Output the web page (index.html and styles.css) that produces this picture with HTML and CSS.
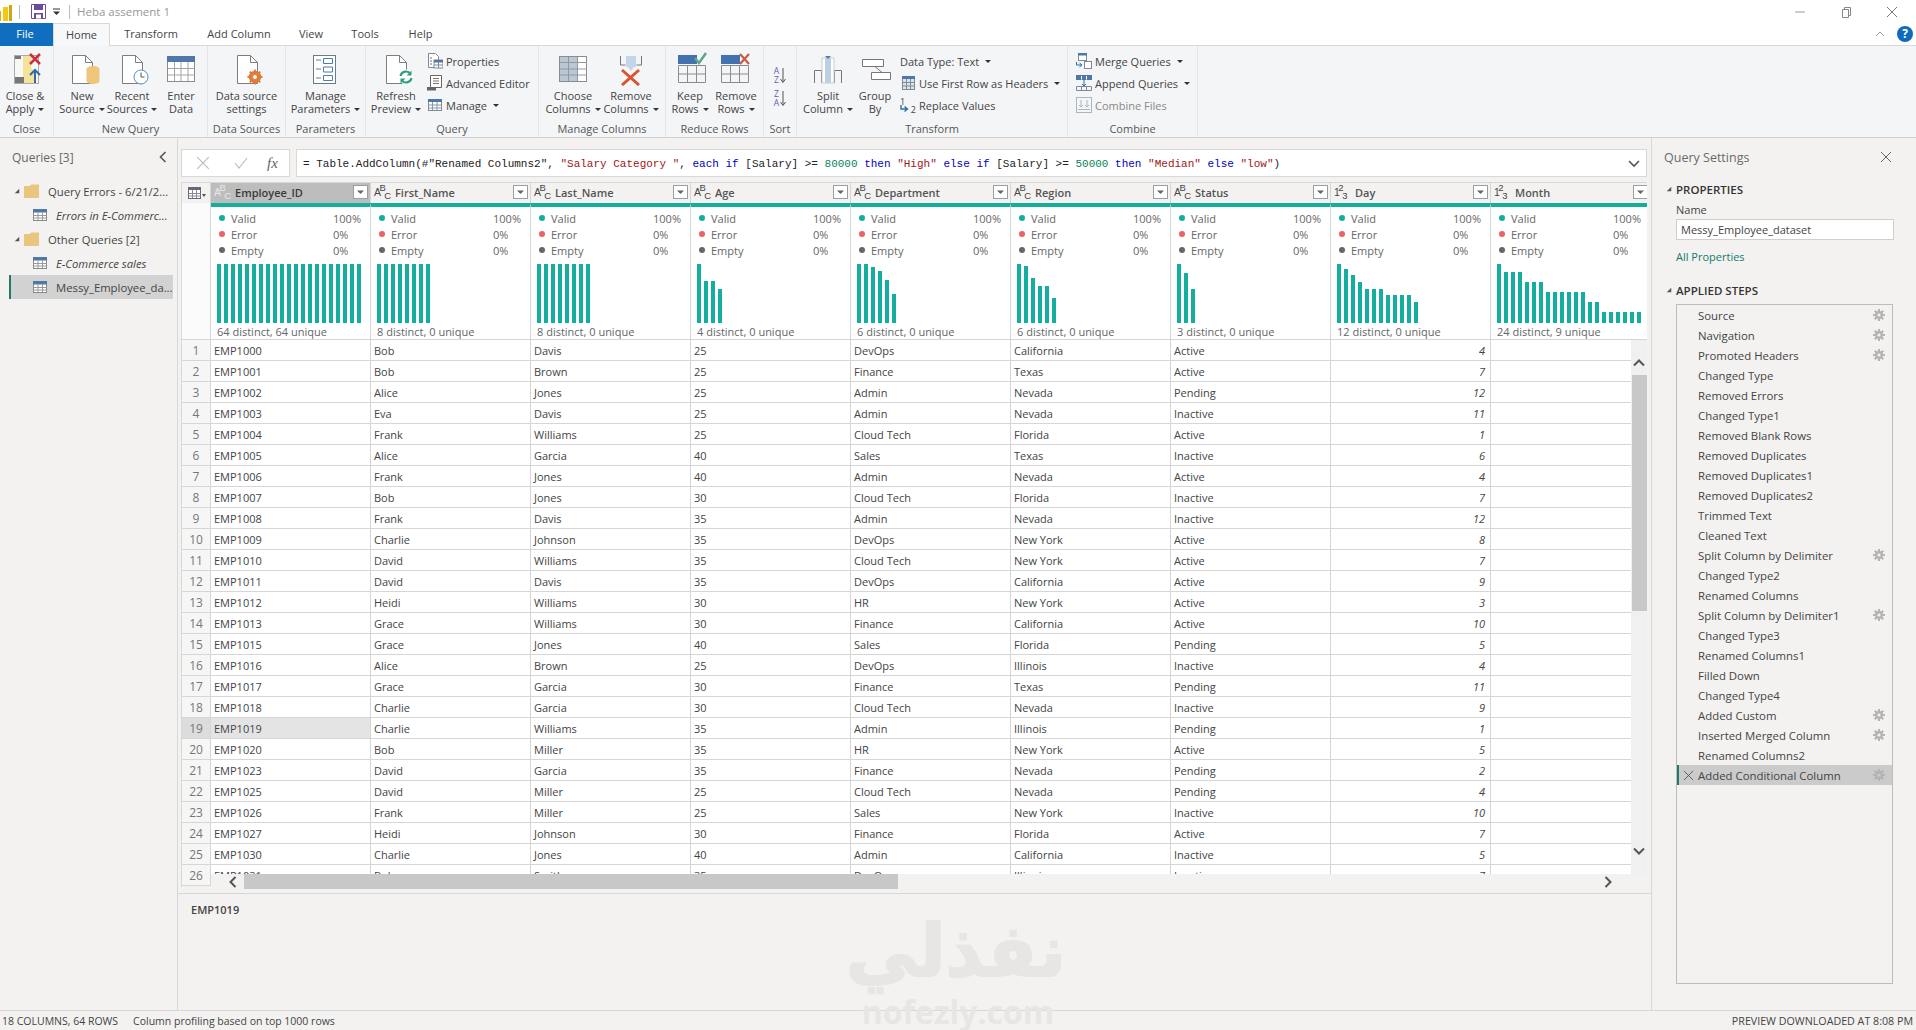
FILE: index.html
```html
<!DOCTYPE html>
<html lang="en">
<head>
    <meta charset="UTF-8">
    <title>Heba assement 1 - Power Query Editor</title>
    <link rel="stylesheet" href="styles.css">
</head>
<body>
<svg class="defs" width="0" height="0">
    <symbol id="doc" viewBox="0 0 36 36"><path d="M8.5 5.5h13l7 7v21h-20z" fill="#fff" stroke="#7d7d7d"/><path d="M21.5 5.5v7h7" fill="none" stroke="#7d7d7d"/></symbol>
    <symbol id="tbl" viewBox="0 0 14 14"><rect x=".5" y="1.5" width="13" height="11" fill="#fff" stroke="#8a8a8a"/><rect x="0" y="1" width="14" height="3.5" fill="#4f77a8"/><path d="M.5 7.500h13M.5 10h13M5 4v8M9.500 4v8" stroke="#9a9a9a" fill="none"/></symbol>
    <symbol id="folder" viewBox="0 0 16 16"><path d="M0 3h6l1-1.500h8v13.500H0z" fill="#e9c67f"/></symbol>
    <symbol id="gear" viewBox="0 0 12 12"><circle cx="6" cy="6" r="2.800" fill="none" stroke="#b4b4b4" stroke-width="2.400"/><path d="M6 0v3M6 9v3M0 6h3M9 6h3M1.700 1.700l2.100 2.100M8.200 8.200l2.100 2.100M10.300 1.700L8.200 3.800M3.800 8.200l-2.100 2.100" stroke="#b4b4b4" stroke-width="2"/></symbol>
    <symbol id="tri" viewBox="0 0 8 8"><path d="M7 1v6H1z" fill="#555"/></symbol>
    <symbol id="filt" viewBox="0 0 15 14"><rect x=".5" y=".5" width="14" height="13" fill="#fff" stroke="#9e9e9e"/><path d="M4 5.500h7L7.500 9z" fill="#666"/></symbol>
    <symbol id="x" viewBox="0 0 12 12"><path d="M1 1l10 10M11 1L1 11" stroke="currentColor" fill="none"/></symbol>
    <symbol id="smalltable" viewBox="0 0 16 16"><rect x="1.500" y="2.500" width="13" height="11" fill="#fff" stroke="#7d8a99"/><rect x="1" y="2" width="14" height="3" fill="#4f77a8"/><path d="M1.500 8h13M1.500 11h13M5.500 5v8M10 5v8" stroke="#8a97a6"/></symbol>
</svg>

<div class="app">
    <div class="titlebar">
        <svg class="pbi" width="12" height="18" viewBox="0 0 12 18"><rect x="-4" y="8" width="5" height="10" fill="#e8a80c"/><rect x="3" y="4" width="5" height="14" fill="#f2c811"/><rect x="9" y="2" width="3" height="16" fill="#d9a40a"/></svg>
        <span class="tb-sep"></span>
        <svg class="save" width="15" height="15" viewBox="0 0 15 15"><path d="M.5.500h14v14H.5z" fill="#fff" stroke="#6b4c9a"/><rect x="3" y="1" width="9" height="5" fill="#6b4c9a"/><rect x="3" y="9" width="9" height="5.500" fill="#6b4c9a"/><rect x="5" y="10.500" width="5" height="4" fill="#fff"/></svg>
        <svg class="qat" width="8" height="8" viewBox="0 0 8 8"><path d="M0 1h7" stroke="#333"/><path d="M0 3.500h7L3.500 7z" fill="#333"/></svg>
        <span class="tb-sep"></span>
        <span class="doc-title">Heba assement 1</span>
        <div class="win-btns">
            <svg width="12" height="12" viewBox="0 0 12 12"><path d="M1 6h10" stroke="#999"/></svg>
            <svg width="12" height="12" viewBox="0 0 12 12"><path d="M2.500 3.500h6v8h-6zM4.500 3.500v-2h6v8h-2" fill="none" stroke="#888"/></svg>
            <svg class="win-x" width="12" height="12"><use href="#x"/></svg>
        </div>
    </div>

    <div class="tabs">
        <span class="tab file">File</span>
        <span class="tab home">Home</span>
        <span class="tab t-transform">Transform</span>
        <span class="tab t-add">Add Column</span>
        <span class="tab t-view">View</span>
        <span class="tab t-tools">Tools</span>
        <span class="tab t-help">Help</span>
        <div class="tab-right">
            <svg width="10" height="8" viewBox="0 0 10 8"><path d="M1 6l4-4 4 4" stroke="#999" fill="none"/></svg>
            <span class="help">?</span>
        </div>
    </div>

    <div class="ribbon">
        <div class="group g-close">
            <div class="group-body">
                <div class="btn w-close">
                    <svg class="ic" viewBox="0 0 36 36"><rect x="7.500" y="5.500" width="24" height="28" fill="#f8f8f4" stroke="#aaa"/><path d="M16 6h8v12l5 4v11H16z" fill="#f5e39a"/><rect x="8" y="6" width="6" height="3" fill="#777"/><rect x="8" y="27" width="9" height="6" fill="#777"/><path d="M23 4l10 10M33 4L23 14" stroke="#c8303a" stroke-width="2.500"/><path d="M28 33V20M23 25l5-5 5 5" fill="none" stroke="#2f6da8" stroke-width="2"/></svg>
                    <span class="lbl">Close &amp;<br>Apply<i class="caret"></i></span>
                </div>
            </div>
            <div class="group-name">Close</div>
        </div>
        <div class="group g-newquery">
            <div class="group-body">
                <div class="btn w-50">
                    <svg class="ic" viewBox="0 0 36 36"><use href="#doc"/><path d="M22.500 19c0-4 13-4 13 0v12c0 4-13 4-13 0z" fill="#eec77a"/></svg>
                    <span class="lbl">New<br>Source<i class="caret"></i></span>
                </div>
                <div class="btn w-50">
                    <svg class="ic" viewBox="0 0 36 36"><use href="#doc"/><circle cx="27" cy="27" r="7" fill="#fff" stroke="#5b8ebf"/><path d="M27 22.500V27h3.500" fill="none" stroke="#555"/></svg>
                    <span class="lbl">Recent<br>Sources<i class="caret"></i></span>
                </div>
                <div class="btn w-48">
                    <svg class="ic" viewBox="0 0 36 36"><rect x="4.500" y="6.500" width="27" height="25" fill="#fff" stroke="#8c8c8c"/><rect x="4" y="6" width="28" height="6" fill="#4f77a8"/><path d="M4.500 18.500h27M4.500 25h27M11.500 12v19M18 12v19M25 12v19" stroke="#a5a5a5"/></svg>
                    <span class="lbl">Enter<br>Data</span>
                </div>
            </div>
            <div class="group-name">New Query</div>
        </div>
        <div class="group g-sources">
            <div class="group-body">
                <div class="btn w-auto">
                    <svg class="ic" viewBox="0 0 36 36"><use href="#doc"/><circle cx="26" cy="27" r="4.500" fill="none" stroke="#e07b39" stroke-width="3.500"/><path d="M26 19.500v15M18.500 27h15M20.700 21.700l10.600 10.600M31.300 21.700L20.700 32.300" stroke="#e07b39" stroke-width="1.800"/><circle cx="26" cy="27" r="2" fill="#fff"/></svg>
                    <span class="lbl">Data source<br>settings</span>
                </div>
            </div>
            <div class="group-name">Data Sources</div>
        </div>
        <div class="group g-params">
            <div class="group-body">
                <div class="btn w-auto">
                    <svg class="ic" viewBox="0 0 36 36"><rect x="6.500" y="5.500" width="22" height="28" fill="#fff" stroke="#6d7a87"/><path d="M9 10h5M9 19h5M9 28h5" stroke="#6d7a87"/><path d="M16.500 8.500h9v5h-9zM16.500 17h9v5h-9zM16.500 25.500h9v5h-9z" fill="#fff" stroke="#4a7db0"/></svg>
                    <span class="lbl">Manage<br>Parameters<i class="caret"></i></span>
                </div>
            </div>
            <div class="group-name">Parameters</div>
        </div>
        <div class="group g-query">
            <div class="group-body">
                <div class="btn w-60">
                    <svg class="ic" viewBox="0 0 36 36"><use href="#doc"/><circle cx="28" cy="27" r="7.500" fill="#fff"/><path d="M22.500 26a5.500 5.500 0 0 1 10-2M33.500 28a5.500 5.500 0 0 1-10 2" fill="none" stroke="#2f9e83" stroke-width="2.200"/><path d="M33.500 20.500v5h-5zM22.500 33.500v-5h5z" fill="#2f9e83"/></svg>
                    <span class="lbl">Refresh<br>Preview<i class="caret"></i></span>
                </div>
                <div class="small-col">
                    <div class="small"><svg class="sic" viewBox="0 0 16 16"><path d="M1.500.500h7l3 3v5h-3v6h-7z" fill="#fff" stroke="#888"/><path d="M3 5h2M3 8h2M3 11h2" stroke="#4f77a8"/><rect x="7" y="7" width="9" height="8" fill="#fff" stroke="#7d8a99"/><rect x="7" y="7" width="9" height="2.500" fill="#4f77a8"/><path d="M7 12h9M11.500 9v6" stroke="#7d8a99"/></svg>Properties</div>
                    <div class="small"><svg class="sic" viewBox="0 0 16 16"><path d="M3.500.500h11v12h-11z" fill="#fff" stroke="#666"/><path d="M6 3.500h6M6 6h6M6 8.500h6" stroke="#777"/><path d="M0 12h9v3.500H0z" fill="#666"/></svg>Advanced Editor</div>
                    <div class="small"><svg class="sic"><use href="#smalltable"/></svg>Manage<i class="caret"></i></div>
                </div>
            </div>
            <div class="group-name">Query</div>
        </div>
        <div class="group g-manage">
            <div class="group-body">
                <div class="btn w-58">
                    <svg class="ic" viewBox="0 0 36 36"><rect x="4.500" y="6.500" width="27" height="25" fill="#fff" stroke="#8c8c8c"/><rect x="5" y="7" width="17" height="24" fill="#bcc7d4"/><path d="M4.500 12.500h27M4.500 19h27M4.500 25h27M13.500 7v24M22.500 7v24" stroke="#8f99a5"/></svg>
                    <span class="lbl">Choose<br>Columns<i class="caret"></i></span>
                </div>
                <div class="btn w-58">
                    <svg class="ic" viewBox="0 0 36 36"><path d="M7.500 6v9h5M28.500 6v9h-5" fill="none" stroke="#777"/><rect x="13" y="6" width="10" height="11" fill="#c3d5e8"/><path d="M15 17h6l-3 4z" fill="#c3d5e8"/><path d="M9 20l17 15M26 20L9 35" stroke="#d8552f" stroke-width="3"/></svg>
                    <span class="lbl">Remove<br>Columns<i class="caret"></i></span>
                </div>
            </div>
            <div class="group-name">Manage Columns</div>
        </div>
        <div class="group g-reduce">
            <div class="group-body">
                <div class="btn w-46">
                    <svg class="ic" viewBox="0 0 36 36"><rect x="6" y="5" width="19" height="9" fill="#4472b0"/><path d="M23 8l4 5 7-10" fill="none" stroke="#5ca68a" stroke-width="2.500"/><path d="M6.500 15.500h27v17h-27zM6.500 24h27M15.500 15.500v17M24.500 15.500v17" fill="none" stroke="#8c8c8c"/></svg>
                    <span class="lbl">Keep<br>Rows<i class="caret"></i></span>
                </div>
                <div class="btn w-46">
                    <svg class="ic" viewBox="0 0 36 36"><rect x="3" y="5" width="19" height="9" fill="#4472b0"/><path d="M22 4l9 10M31 4l-9 10" stroke="#c75b4a" stroke-width="2.200"/><path d="M3.500 15.500h27v17h-27zM3.500 24h27M12.500 15.500v17M21.500 15.500v17" fill="none" stroke="#8c8c8c"/></svg>
                    <span class="lbl">Remove<br>Rows<i class="caret"></i></span>
                </div>
            </div>
            <div class="group-name">Reduce Rows</div>
        </div>
        <div class="group g-sort">
            <div class="group-body sort-body">
                <div class="sort-ic"><span class="az">A<br>Z</span><svg width="6" height="17" viewBox="0 0 6 17"><path d="M3 1v14M.5 12L3 15.500 5.500 12" fill="none" stroke="#555"/></svg></div>
                <div class="sort-ic"><span class="az">Z<br>A</span><svg width="6" height="17" viewBox="0 0 6 17"><path d="M3 1v14M.5 12L3 15.500 5.500 12" fill="none" stroke="#555"/></svg></div>
            </div>
            <div class="group-name">Sort</div>
        </div>
        <div class="group g-transform">
            <div class="group-body">
                <div class="btn w-54">
                    <svg class="ic" viewBox="0 0 36 36"><path d="M4.500 33V20.500h7V33M31.500 33V20.500h-7V33" fill="none" stroke="#777"/><rect x="12" y="8" width="12" height="25" fill="#fff" stroke="#ccc"/><rect x="15" y="8" width="6" height="25" fill="#bcd0e4"/><path d="M15 6h6l-3 3z" fill="#4a7db0"/></svg>
                    <span class="lbl">Split<br>Column<i class="caret"></i></span>
                </div>
                <div class="btn w-40">
                    <svg class="ic" viewBox="0 0 36 36"><path d="M5.500 9.500h21v7h-21zM14.500 22.500h19v7h-19z" fill="#fff" stroke="#777"/><path d="M18 16.500l7 6" stroke="#777"/></svg>
                    <span class="lbl">Group<br>By</span>
                </div>
                <div class="small-col">
                    <div class="small"><span class="no-ic"></span>Data Type: Text<i class="caret"></i></div>
                    <div class="small"><svg class="sic" viewBox="0 0 16 16"><rect x="2.500" y="1.500" width="12" height="13" fill="#dfe4ea" stroke="#7d8a99"/><rect x="2" y="1" width="13" height="3" fill="#4f77a8"/><path d="M2.500 7.500h12M2.500 11h12M6.500 4v11M10.500 4v11" stroke="#7d8a99"/></svg>Use First Row as Headers<i class="caret"></i></div>
                    <div class="small"><span class="sic repl">1<b>2</b><svg width="9" height="8" viewBox="0 0 9 8"><path d="M1 0v4h6M4.500 1.500L7.500 4 4.500 6.500" fill="none" stroke="#2f6da8" stroke-width="1.400"/></svg></span>Replace Values</div>
                </div>
            </div>
            <div class="group-name">Transform</div>
        </div>
        <div class="group g-combine">
            <div class="group-body">
                <div class="small-col">
                    <div class="small"><svg class="sic" viewBox="0 0 16 16"><rect x="2.500" y=".5" width="8" height="7" fill="#fff" stroke="#7d8a99"/><rect x="2" y="0" width="9" height="2.500" fill="#4f77a8"/><rect x="8.500" y="8.500" width="7" height="7" fill="#fff" stroke="#7d8a99"/><path d="M.5 9v3h5M3.500 10L6 12l-2.500 2" fill="none" stroke="#2f6da8"/></svg>Merge Queries<i class="caret"></i></div>
                    <div class="small"><svg class="sic" viewBox="0 0 16 16"><rect x=".5" y=".5" width="15" height="4" fill="#4f77a8" stroke="#4f77a8"/><path d="M5.500 1v3.500M10.500 1v3.500" stroke="#fff"/><path d="M.5 11.500h15v4H.5zM5.500 11.500v4M10.500 11.500v4" fill="none" stroke="#7d8a99"/><path d="M8 5v6M6 9l2 2 2-2" fill="none" stroke="#2f6da8"/></svg>Append Queries<i class="caret"></i></div>
                    <div class="small muted"><svg class="sic" viewBox="0 0 16 16"><rect x=".5" y=".5" width="15" height="15" fill="#f3f5f7" stroke="#a9b6c4"/><path d="M5 3v7M3 8l2 2 2-2M11 3v7M9 8l2 2 2-2M2 12.500h12" fill="none" stroke="#a9b6c4"/></svg>Combine Files</div>
                </div>
            </div>
            <div class="group-name">Combine</div>
        </div>
    </div>

    <div class="main">
        <div class="queries">
            <div class="pane-head">
                <span>Queries [3]</span>
                <svg width="8" height="12" viewBox="0 0 8 12"><path d="M6.500 1L1.500 6l5 5" fill="none" stroke="#555" stroke-width="1.600"/></svg>
            </div>
            <div class="tree">
                <div class="node folder-node"><svg class="t-tri"><use href="#tri"/></svg><svg class="t-folder"><use href="#folder"/></svg>Query Errors - 6/21/2...</div>
                <div class="node child em"><svg class="t-tbl"><use href="#tbl"/></svg>Errors in E-Commerc...</div>
                <div class="node folder-node"><svg class="t-tri"><use href="#tri"/></svg><svg class="t-folder"><use href="#folder"/></svg>Other Queries [2]</div>
                <div class="node child em"><svg class="t-tbl"><use href="#tbl"/></svg>E-Commerce sales</div>
                <div class="node child selected"><svg class="t-tbl"><use href="#tbl"/></svg>Messy_Employee_da...</div>
            </div>
        </div>

        <div class="center">
            <div class="formula-row">
                <div class="formula-btns">
                    <svg class="f-x" width="14" height="14"><use href="#x"/></svg>
                    <svg class="f-check" width="14" height="12" viewBox="0 0 14 12"><path d="M1 6l4 5 8-10" fill="none" stroke="#bdbdbd" stroke-width="1.200"/></svg>
                    <span class="fx">fx</span>
                </div>
                <div class="formula-input">
                    <code>= Table.AddColumn(#"Renamed Columns2", <s>"Salary Category "</s>, <b>each</b> <b>if</b> [Salary] &gt;= <u>80000</u> <b>then</b> <s>"High"</s> <b>else</b> <b>if</b> [Salary] &gt;= <u>50000</u> <b>then</b> <s>"Median"</s> <b>else</b> <s>"low"</s>)</code>
                    <svg width="12" height="8" viewBox="0 0 12 8"><path d="M1 1l5 5 5-5" fill="none" stroke="#555" stroke-width="1.600"/></svg>
                </div>
            </div>

            <div class="grid-wrap">
                <div class="grid-clip">
                    <table class="grid">
                        <thead>
                            <tr class="heads">
                                <th class="corner"><svg class="corner-ic" width="18" height="14" viewBox="0 0 18 14"><rect x=".5" y="1.500" width="12" height="11" fill="#fff" stroke="#667"/><rect x="0" y="1" width="13" height="3" fill="#667"/><path d="M.5 7.500h12M.5 10h12M4.500 4v8M8.500 4v8" stroke="#889"/><path d="M14 8h4l-2 3z" fill="#555"/></svg></th>
                                <th class="active"><div class="head"><span class="type">A<sup>B</sup><sub>C</sub></span><span class="hname">Employee_ID</span><svg class="filt"><use href="#filt"/></svg></div></th>
                                <th><div class="head"><span class="type">A<sup>B</sup><sub>C</sub></span><span class="hname">First_Name</span><svg class="filt"><use href="#filt"/></svg></div></th>
                                <th><div class="head"><span class="type">A<sup>B</sup><sub>C</sub></span><span class="hname">Last_Name</span><svg class="filt"><use href="#filt"/></svg></div></th>
                                <th><div class="head"><span class="type">A<sup>B</sup><sub>C</sub></span><span class="hname">Age</span><svg class="filt"><use href="#filt"/></svg></div></th>
                                <th><div class="head"><span class="type">A<sup>B</sup><sub>C</sub></span><span class="hname">Department</span><svg class="filt"><use href="#filt"/></svg></div></th>
                                <th><div class="head"><span class="type">A<sup>B</sup><sub>C</sub></span><span class="hname">Region</span><svg class="filt"><use href="#filt"/></svg></div></th>
                                <th><div class="head"><span class="type">A<sup>B</sup><sub>C</sub></span><span class="hname">Status</span><svg class="filt"><use href="#filt"/></svg></div></th>
                                <th><div class="head"><span class="type">1<sup>2</sup><sub>3</sub></span><span class="hname">Day</span><svg class="filt"><use href="#filt"/></svg></div></th>
                                <th><div class="head"><span class="type">1<sup>2</sup><sub>3</sub></span><span class="hname">Month</span><svg class="filt"><use href="#filt"/></svg></div></th>
                            </tr>
                            <tr class="profile">
                                <td class="rn-blank"></td>
                                <td><div class="stats"><span class="v">Valid</span><em>100%</em><span class="e">Error</span><em>0%</em><span class="n">Empty</span><em>0%</em></div>
                                    <div class="bars"><i></i><i></i><i></i><i></i><i></i><i></i><i></i><i></i><i></i><i></i><i></i><i></i><i></i><i></i><i></i><i></i><i></i><i></i><i></i><i></i><i></i></div>
                                    <div class="cap">64 distinct, 64 unique</div></td>
                                <td><div class="stats"><span class="v">Valid</span><em>100%</em><span class="e">Error</span><em>0%</em><span class="n">Empty</span><em>0%</em></div>
                                    <div class="bars"><i></i><i></i><i></i><i></i><i></i><i></i><i></i><i></i></div>
                                    <div class="cap">8 distinct, 0 unique</div></td>
                                <td><div class="stats"><span class="v">Valid</span><em>100%</em><span class="e">Error</span><em>0%</em><span class="n">Empty</span><em>0%</em></div>
                                    <div class="bars"><i></i><i></i><i></i><i></i><i></i><i></i><i></i><i></i></div>
                                    <div class="cap">8 distinct, 0 unique</div></td>
                                <td><div class="stats"><span class="v">Valid</span><em>100%</em><span class="e">Error</span><em>0%</em><span class="n">Empty</span><em>0%</em></div>
                                    <div class="bars"><i style="height:59px"></i><i style="height:42px"></i><i style="height:42px"></i><i style="height:34px"></i></div>
                                    <div class="cap">4 distinct, 0 unique</div></td>
                                <td><div class="stats"><span class="v">Valid</span><em>100%</em><span class="e">Error</span><em>0%</em><span class="n">Empty</span><em>0%</em></div>
                                    <div class="bars"><i style="height:59px"></i><i style="height:59px"></i><i style="height:56px"></i><i style="height:52px"></i><i style="height:43px"></i><i style="height:29px"></i></div>
                                    <div class="cap">6 distinct, 0 unique</div></td>
                                <td><div class="stats"><span class="v">Valid</span><em>100%</em><span class="e">Error</span><em>0%</em><span class="n">Empty</span><em>0%</em></div>
                                    <div class="bars"><i style="height:59px"></i><i style="height:57px"></i><i style="height:45px"></i><i style="height:37px"></i><i style="height:37px"></i><i style="height:25px"></i></div>
                                    <div class="cap">6 distinct, 0 unique</div></td>
                                <td><div class="stats"><span class="v">Valid</span><em>100%</em><span class="e">Error</span><em>0%</em><span class="n">Empty</span><em>0%</em></div>
                                    <div class="bars"><i style="height:59px"></i><i style="height:50px"></i><i style="height:34px"></i></div>
                                    <div class="cap">3 distinct, 0 unique</div></td>
                                <td><div class="stats"><span class="v">Valid</span><em>100%</em><span class="e">Error</span><em>0%</em><span class="n">Empty</span><em>0%</em></div>
                                    <div class="bars"><i style="height:59px"></i><i style="height:54px"></i><i style="height:48px"></i><i style="height:41px"></i><i style="height:34px"></i><i style="height:34px"></i><i style="height:34px"></i><i style="height:28px"></i><i style="height:28px"></i><i style="height:28px"></i><i style="height:28px"></i><i style="height:21px"></i></div>
                                    <div class="cap">12 distinct, 0 unique</div></td>
                                <td><div class="stats"><span class="v">Valid</span><em>100%</em><span class="e">Error</span><em>0%</em><span class="n">Empty</span><em>0%</em></div>
                                    <div class="bars"><i style="height:59px"></i><i style="height:51px"></i><i style="height:51px"></i><i style="height:51px"></i><i style="height:41px"></i><i style="height:41px"></i><i style="height:41px"></i><i style="height:31px"></i><i style="height:31px"></i><i style="height:31px"></i><i style="height:31px"></i><i style="height:31px"></i><i style="height:31px"></i><i style="height:21px"></i><i style="height:21px"></i><i style="height:11px"></i><i style="height:11px"></i><i style="height:11px"></i><i style="height:11px"></i><i style="height:11px"></i><i style="height:11px"></i></div>
                                    <div class="cap">24 distinct, 9 unique</div></td>
                            </tr>
                        </thead>
                        <tbody>
                            <tr><th>1</th><td>EMP1000</td><td>Bob</td><td>Davis</td><td>25</td><td>DevOps</td><td>California</td><td>Active</td><td class="num">4</td><td></td></tr>
                            <tr><th>2</th><td>EMP1001</td><td>Bob</td><td>Brown</td><td>25</td><td>Finance</td><td>Texas</td><td>Active</td><td class="num">7</td><td></td></tr>
                            <tr><th>3</th><td>EMP1002</td><td>Alice</td><td>Jones</td><td>25</td><td>Admin</td><td>Nevada</td><td>Pending</td><td class="num">12</td><td></td></tr>
                            <tr><th>4</th><td>EMP1003</td><td>Eva</td><td>Davis</td><td>25</td><td>Admin</td><td>Nevada</td><td>Inactive</td><td class="num">11</td><td></td></tr>
                            <tr><th>5</th><td>EMP1004</td><td>Frank</td><td>Williams</td><td>25</td><td>Cloud Tech</td><td>Florida</td><td>Active</td><td class="num">1</td><td></td></tr>
                            <tr><th>6</th><td>EMP1005</td><td>Alice</td><td>Garcia</td><td>40</td><td>Sales</td><td>Texas</td><td>Inactive</td><td class="num">6</td><td></td></tr>
                            <tr><th>7</th><td>EMP1006</td><td>Frank</td><td>Jones</td><td>40</td><td>Admin</td><td>Nevada</td><td>Active</td><td class="num">4</td><td></td></tr>
                            <tr><th>8</th><td>EMP1007</td><td>Bob</td><td>Jones</td><td>30</td><td>Cloud Tech</td><td>Florida</td><td>Inactive</td><td class="num">7</td><td></td></tr>
                            <tr><th>9</th><td>EMP1008</td><td>Frank</td><td>Davis</td><td>35</td><td>Admin</td><td>Nevada</td><td>Inactive</td><td class="num">12</td><td></td></tr>
                            <tr><th>10</th><td>EMP1009</td><td>Charlie</td><td>Johnson</td><td>35</td><td>DevOps</td><td>New York</td><td>Active</td><td class="num">8</td><td></td></tr>
                            <tr><th>11</th><td>EMP1010</td><td>David</td><td>Williams</td><td>35</td><td>Cloud Tech</td><td>New York</td><td>Active</td><td class="num">7</td><td></td></tr>
                            <tr><th>12</th><td>EMP1011</td><td>David</td><td>Davis</td><td>35</td><td>DevOps</td><td>California</td><td>Active</td><td class="num">9</td><td></td></tr>
                            <tr><th>13</th><td>EMP1012</td><td>Heidi</td><td>Williams</td><td>30</td><td>HR</td><td>New York</td><td>Active</td><td class="num">3</td><td></td></tr>
                            <tr><th>14</th><td>EMP1013</td><td>Grace</td><td>Williams</td><td>30</td><td>Finance</td><td>California</td><td>Active</td><td class="num">10</td><td></td></tr>
                            <tr><th>15</th><td>EMP1015</td><td>Grace</td><td>Jones</td><td>40</td><td>Sales</td><td>Florida</td><td>Pending</td><td class="num">5</td><td></td></tr>
                            <tr><th>16</th><td>EMP1016</td><td>Alice</td><td>Brown</td><td>25</td><td>DevOps</td><td>Illinois</td><td>Inactive</td><td class="num">4</td><td></td></tr>
                            <tr><th>17</th><td>EMP1017</td><td>Grace</td><td>Garcia</td><td>30</td><td>Finance</td><td>Texas</td><td>Pending</td><td class="num">11</td><td></td></tr>
                            <tr><th>18</th><td>EMP1018</td><td>Charlie</td><td>Garcia</td><td>30</td><td>Cloud Tech</td><td>Nevada</td><td>Inactive</td><td class="num">9</td><td></td></tr>
                            <tr class="cur"><th>19</th><td class="cur-cell">EMP1019</td><td>Charlie</td><td>Williams</td><td>35</td><td>Admin</td><td>Illinois</td><td>Pending</td><td class="num">1</td><td></td></tr>
                            <tr><th>20</th><td>EMP1020</td><td>Bob</td><td>Miller</td><td>35</td><td>HR</td><td>New York</td><td>Active</td><td class="num">5</td><td></td></tr>
                            <tr><th>21</th><td>EMP1023</td><td>David</td><td>Garcia</td><td>35</td><td>Finance</td><td>Nevada</td><td>Pending</td><td class="num">2</td><td></td></tr>
                            <tr><th>22</th><td>EMP1025</td><td>David</td><td>Miller</td><td>25</td><td>Cloud Tech</td><td>Nevada</td><td>Pending</td><td class="num">4</td><td></td></tr>
                            <tr><th>23</th><td>EMP1026</td><td>Frank</td><td>Miller</td><td>25</td><td>Sales</td><td>New York</td><td>Inactive</td><td class="num">10</td><td></td></tr>
                            <tr><th>24</th><td>EMP1027</td><td>Heidi</td><td>Johnson</td><td>30</td><td>Finance</td><td>Florida</td><td>Active</td><td class="num">7</td><td></td></tr>
                            <tr><th>25</th><td>EMP1030</td><td>Charlie</td><td>Jones</td><td>40</td><td>Admin</td><td>California</td><td>Inactive</td><td class="num">5</td><td></td></tr>
                            <tr><th>26</th><td>EMP1031</td><td>Bob</td><td>Smith</td><td>35</td><td>DevOps</td><td>Illinois</td><td>Inactive</td><td class="num">7</td><td></td></tr>
                        </tbody>
                    </table>
                </div>
                <div class="vscroll">
                    <svg class="v-up" width="12" height="8" viewBox="0 0 12 8"><path d="M1 6.500l5-5 5 5" fill="none" stroke="#555" stroke-width="2"/></svg>
                    <div class="v-thumb"></div>
                    <svg class="v-down" width="12" height="8" viewBox="0 0 12 8"><path d="M1 1.500l5 5 5-5" fill="none" stroke="#555" stroke-width="2"/></svg>
                </div>
                <div class="hscroll">
                    <svg class="h-left" width="8" height="12" viewBox="0 0 8 12"><path d="M6.500 1l-5 5 5 5" fill="none" stroke="#555" stroke-width="2"/></svg>
                    <div class="h-thumb"></div>
                    <svg class="h-right" width="8" height="12" viewBox="0 0 8 12"><path d="M1.500 1l5 5-5 5" fill="none" stroke="#555" stroke-width="2"/></svg>
                </div>
            </div>

            <div class="details">EMP1019</div>
        </div>

        <div class="settings">
            <div class="settings-title"><span>Query Settings</span><svg width="12" height="12"><use href="#x"/></svg></div>
            <div class="sec-head"><svg class="t-tri"><use href="#tri"/></svg>PROPERTIES</div>
            <div class="name-lbl">Name</div>
            <div class="name-input">Messy_Employee_dataset</div>
            <div class="all-props">All Properties</div>
            <div class="sec-head applied"><svg class="t-tri"><use href="#tri"/></svg>APPLIED STEPS</div>
            <div class="steps">
                <div class="step"><span>Source</span><svg class="gear"><use href="#gear"/></svg></div>
                <div class="step"><span>Navigation</span><svg class="gear"><use href="#gear"/></svg></div>
                <div class="step"><span>Promoted Headers</span><svg class="gear"><use href="#gear"/></svg></div>
                <div class="step"><span>Changed Type</span></div>
                <div class="step"><span>Removed Errors</span></div>
                <div class="step"><span>Changed Type1</span></div>
                <div class="step"><span>Removed Blank Rows</span></div>
                <div class="step"><span>Removed Duplicates</span></div>
                <div class="step"><span>Removed Duplicates1</span></div>
                <div class="step"><span>Removed Duplicates2</span></div>
                <div class="step"><span>Trimmed Text</span></div>
                <div class="step"><span>Cleaned Text</span></div>
                <div class="step"><span>Split Column by Delimiter</span><svg class="gear"><use href="#gear"/></svg></div>
                <div class="step"><span>Changed Type2</span></div>
                <div class="step"><span>Renamed Columns</span></div>
                <div class="step"><span>Split Column by Delimiter1</span><svg class="gear"><use href="#gear"/></svg></div>
                <div class="step"><span>Changed Type3</span></div>
                <div class="step"><span>Renamed Columns1</span></div>
                <div class="step"><span>Filled Down</span></div>
                <div class="step"><span>Changed Type4</span></div>
                <div class="step"><span>Added Custom</span><svg class="gear"><use href="#gear"/></svg></div>
                <div class="step"><span>Inserted Merged Column</span><svg class="gear"><use href="#gear"/></svg></div>
                <div class="step"><span>Renamed Columns2</span></div>
                <div class="step selected"><svg class="step-x" width="11" height="11"><use href="#x"/></svg><span>Added Conditional Column</span><svg class="gear"><use href="#gear"/></svg></div>
            </div>
        </div>
    </div>

    <div class="statusbar">
        <span>18 COLUMNS, 64 ROWS</span>
        <span class="profiling">Column profiling based on top 1000 rows</span>
        <span class="preview">PREVIEW DOWNLOADED AT 8:08 PM</span>
    </div>

    <div class="watermark">
        <div class="wm-ar" lang="ar" dir="rtl">نفذلي</div>
        <div class="wm-en">nofezly.com</div>
    </div>
</div>
</body>
</html>
```

FILE: styles.css
```css
* {
    margin: 0;
    padding: 0;
    box-sizing: border-box;
}

body {
    font-family: "Open Sans", "Noto Sans", sans-serif;
    font-size: 11px;
    color: #444;
    background: #f3f2f1;
    overflow: hidden;
}

.defs {
    position: absolute;
}

.app {
    position: relative;
    width: 1916px;
    height: 1030px;
    display: flex;
    flex-direction: column;
    overflow: hidden;
}

/* title bar */
.titlebar {
    height: 23px;
    background: #fff;
    display: flex;
    align-items: center;
    flex: none;
}

.pbi {
    margin-right: 7px;
}

.tb-sep {
    width: 1px;
    height: 14px;
    background: #bbb;
}

.save {
    margin-left: 11px;
}

.qat {
    margin: 0 8px 0 7px;
}

.doc-title {
    margin-left: 7px;
    color: #999;
    font-size: 11.5px;
}

.win-btns {
    margin-left: auto;
    display: flex;
    gap: 34px;
    margin-right: 18px;
}

.win-x {
    color: #777;
}

/* tabs */
.tabs {
    height: 23px;
    background: #fff;
    border-bottom: 1px solid #d8d8d8;
    display: flex;
    flex: none;
    position: relative;
}

.tab {
    height: 23px;
    line-height: 22px;
    font-size: 11px;
    text-align: center;
    color: #444;
}

.file {
    width: 53px;
    padding-right: 3px;
    background: #106ebe;
    color: #fff;
}

.home {
    width: 57px;
    background: #f7f8f9;
    border: 1px solid #d8d8d8;
    border-bottom: none;
}

.t-transform { width: 82px; }
.t-add { width: 94px; }
.t-view { width: 50px; }
.t-tools { width: 58px; }
.t-help { width: 53px; }

.tab-right {
    margin-left: auto;
    display: flex;
    align-items: center;
    gap: 12px;
    margin-right: 3px;
}

.help {
    width: 16px;
    height: 16px;
    border-radius: 50%;
    background: #0f6cbd;
    color: #fff;
    font-size: 12px;
    font-weight: 700;
    line-height: 16px;
    text-align: center;
}

/* ribbon */
.ribbon {
    height: 92px;
    background: #f4f5f7;
    border-bottom: 1px solid #d0d0d0;
    display: flex;
    flex: none;
}

.group {
    display: flex;
    flex-direction: column;
    border-right: 1px solid #e3e5e8;
    height: 91px;
}

.group-body {
    height: 76px;
    padding-top: 4px;
    display: flex;
    justify-content: center;
    flex: none;
}

.group-name {
    height: 14px;
    line-height: 14px;
    text-align: center;
    color: #555;
}

.g-close { width: 54px; }
.g-newquery { width: 154px; }
.g-sources { width: 78px; }
.g-params { width: 80px; }
.g-query { width: 173px; }
.g-manage { width: 127px; }
.g-reduce { width: 98px; }
.g-sort { width: 33px; }
.g-transform { width: 271px; }
.g-combine { width: 130px; }

.g-close .group-body { justify-content: flex-start; }
.g-newquery .group-body { justify-content: flex-start; padding-left: 3px; }
.g-query .group-body { justify-content: flex-start; }
.g-manage .group-body { justify-content: flex-start; padding-left: 5px; }
.g-reduce .group-body { justify-content: flex-start; padding-left: 1px; }
.g-transform .group-body { justify-content: flex-start; padding-left: 4px; }
.g-combine .group-body { justify-content: flex-start; padding-left: 7px; }
.g-transform .small-col { margin-left: 5px; }

.btn {
    display: flex;
    flex-direction: column;
    align-items: center;
    flex: none;
}

.w-close { width: 50px; }
.w-50 { width: 50px; }
.w-48 { width: 48px; }
.w-60 { width: 60px; }
.w-58 { width: 58px; }
.w-46 { width: 46px; }
.w-54 { width: 54px; }
.w-40 { width: 40px; }

.ic {
    width: 36px;
    height: 36px;
    flex: none;
}

.lbl {
    margin-top: 3px;
    line-height: 13px;
    text-align: center;
    white-space: nowrap;
}

.caret {
    display: inline-block;
    width: 0;
    height: 0;
    margin-left: 4px;
    vertical-align: 2px;
    border-left: 3px solid transparent;
    border-right: 3px solid transparent;
    border-top: 3px solid #333;
}

.small-col {
    display: flex;
    flex-direction: column;
    margin-left: 1px;
}

.small {
    height: 22px;
    display: flex;
    align-items: center;
    white-space: nowrap;
}

.small .caret {
    margin-left: 6px;
    vertical-align: 0;
}

.sic {
    width: 16px;
    height: 16px;
    margin-right: 3px;
    flex: none;
}

.no-ic {
    width: 0;
}

.muted {
    color: #888;
}

.repl {
    position: relative;
    font-size: 9px;
    line-height: 9px;
}

.repl b {
    position: absolute;
    right: 0;
    bottom: -1px;
    font-weight: 400;
}

.repl svg {
    position: absolute;
    left: 0;
    bottom: 0;
}

.sort-body {
    flex-direction: column;
    align-items: center;
    gap: 5px;
    padding-top: 5px;
}

.sort-ic {
    display: flex;
    align-items: center;
    gap: 1px;
}

.az {
    font-size: 8.500px;
    line-height: 9px;
    color: #5a5fb0;
    text-align: center;
}

/* main layout */
.main {
    flex: 1;
    display: flex;
    min-height: 0;
}

.queries {
    width: 178px;
    border-right: 1px solid #d8d8d8;
    flex: none;
}

.pane-head {
    display: flex;
    justify-content: space-between;
    align-items: center;
    height: 38px;
    padding: 0 10px 0 12px;
    font-size: 12px;
    color: #666;
}

.tree {
    padding: 3px 4px 0 9px;
}

.node {
    height: 24px;
    display: flex;
    align-items: center;
    white-space: nowrap;
    font-size: 11.300px;
}

.folder-node {
    padding-left: 5px;
}

.child {
    padding-left: 24px;
}

.em {
    font-style: italic;
}

.node.selected {
    background: #d2d2d2;
    border-left: 2px solid #217a6b;
    padding-left: 22px;
}

.t-tri {
    width: 6px;
    height: 6px;
    margin-right: 4px;
    flex: none;
}

.t-folder {
    width: 16px;
    height: 16px;
    margin-right: 8px;
    flex: none;
}

.t-tbl {
    width: 14px;
    height: 14px;
    margin-right: 9px;
    flex: none;
}

.center {
    flex: 1;
    display: flex;
    flex-direction: column;
    min-width: 0;
}

/* formula bar */
.formula-row {
    display: flex;
    height: 44px;
    padding: 11px 0 5px 3px;
    gap: 6px;
    flex: none;
}

.formula-btns {
    width: 109px;
    background: #fff;
    border: 1px solid #d8d8d8;
    display: flex;
    align-items: center;
    color: #bdbdbd;
    padding-left: 14px;
}

.f-check {
    margin-left: 24px;
}

.fx {
    margin-left: 19px;
    font-family: "Liberation Serif", serif;
    font-style: italic;
    font-size: 15px;
    color: #666;
}

.formula-input {
    width: 1351px;
    background: #fff;
    border: 1px solid #d8d8d8;
    display: flex;
    align-items: center;
    justify-content: space-between;
    padding: 1px 6px 0 6px;
}

.formula-input code {
    font-family: "Liberation Mono", monospace;
    font-size: 11px;
    color: #222;
    white-space: pre;
}

.formula-input b {
    font-weight: 400;
    color: #0000c8;
}

.formula-input s {
    text-decoration: none;
    color: #a31515;
}

.formula-input u {
    text-decoration: none;
    color: #098658;
}

/* grid */
.grid-wrap {
    position: relative;
    height: 712px;
    flex: none;
    border-bottom: 1px solid #d8d8d8;
}

.grid-clip {
    margin-left: 3px;
    width: 1466px;
    height: 705px;
    overflow: hidden;
    border-left: 1px solid #d8d8d8;
    border-top: 1px solid #d8d8d8;
}

.grid {
    table-layout: fixed;
    width: 1469px;
    border-collapse: separate;
    border-spacing: 0;
}

.grid th,
.grid td {
    border-right: 1px solid #d6d6d6;
    border-bottom: 1px solid #d6d6d6;
    white-space: nowrap;
    overflow: hidden;
    font-weight: 400;
    height: 21px;
    padding: 0;
}

.grid tbody th {
    width: 29px;
    background: #f6f6f6;
    color: #777;
    font-size: 12px;
    text-align: center;
}

.grid tbody td {
    background: #fff;
    padding: 0 3px;
    color: #444;
}

.grid tbody td.num {
    text-align: right;
    font-style: italic;
    padding-right: 5px;
}

.grid tbody tr.cur th {
    background: #dcdcdc;
}

.grid tbody td.cur-cell {
    background: #e4e4e4;
}

.grid .heads th {
    height: 20px;
    background: #f3f2f1;
    border-bottom: none;
}

th.corner {
    width: 29px;
    text-align: left;
}

.corner-ic {
    display: block;
    margin-left: 6px;
}

.grid .heads th.active {
    background: #bdbdbd;
}

.active .type {
    color: #e9e9e9;
}

.active .hname {
    color: #3a3a3a;
}

.head {
    display: flex;
    align-items: center;
    height: 20px;
    padding: 0 0 2px 3px;
    position: relative;
}

.type {
    width: 20px;
    flex: none;
    font-size: 10.500px;
    line-height: 18px;
    color: #444;
    font-family: "Liberation Sans", sans-serif;
    text-align: left;
}

.type sup,
.type sub {
    font-size: 9.500px;
    line-height: 0;
    position: relative;
    vertical-align: baseline;
    margin-left: -1.500px;
}

.type sup {
    top: -5px;
}

.type sub {
    top: 3px;
}

.hname {
    font-weight: 600;
    color: #555;
    margin-left: 1px;
}

.filt {
    position: absolute;
    right: 2px;
    top: 2px;
    width: 15px;
    height: 14px;
}

.grid .profile td {
    height: 137px;
    background: #fff;
    border-top: 4px solid #14ae9e;
    vertical-align: top;
    padding: 3px 0 0;
}

.grid .profile td.rn-blank {
    background: #fbfbfb;
    border-top: none;
}

.stats {
    display: grid;
    grid-template-columns: 1fr auto;
    grid-auto-rows: 16px;
    align-items: center;
    padding: 0 9px 0 8px;
    color: #666;
}

.stats em {
    font-style: normal;
}

.stats span {
    display: flex;
    align-items: center;
}

.stats span::before {
    content: "";
    width: 6px;
    height: 6px;
    border-radius: 50%;
    margin-right: 6px;
}

.v::before { background: #14ae9e; }
.e::before { background: #f0625f; }
.n::before { background: #666; }

.bars {
    display: flex;
    align-items: flex-end;
    gap: 3px;
    height: 59px;
    margin: 6px 0 0 6px;
}

.bars i {
    display: block;
    width: 4px;
    height: 59px;
    flex: none;
    background: #14ae9e;
}

.cap {
    height: 14px;
    line-height: 14px;
    margin: 2px 0 0 6px;
    color: #666;
}

/* scrollbars sit over the grid */
.vscroll {
    position: absolute;
    left: 1453px;
    top: 158px;
    width: 16px;
    height: 534px;
    background: #f0f0f0;
    display: flex;
    flex-direction: column;
    align-items: center;
}

.v-up {
    margin-top: 19px;
}

.v-thumb {
    width: 15px;
    height: 236px;
    margin-top: 8px;
    background: #c8c8c8;
}

.v-down {
    margin-top: 236px;
}

.hscroll {
    position: absolute;
    left: 33px;
    top: 692px;
    width: 1436px;
    height: 19px;
    background: #f3f2f1;
    display: flex;
    align-items: flex-start;
}

.h-left {
    margin: 2px 0 0 18px;
}

.h-thumb {
    width: 654px;
    height: 15px;
    margin-left: 7px;
    background: #c8c8c8;
}

.h-right {
    margin: 2px 0 0 706px;
}

.details {
    flex: 1;
    padding: 7px 0 0 13px;
    font-weight: 600;
    color: #444;
    line-height: 18px;
}

/* query settings */
.settings {
    width: 265px;
    flex: none;
    border-left: 1px solid #d8d8d8;
    padding: 9px 23px 0 24px;
}

.settings-title {
    display: flex;
    align-items: center;
    justify-content: space-between;
    height: 20px;
    margin-left: -12px;
    font-size: 12.500px;
    color: #6a6a6a;
}

.settings-title svg {
    color: #666;
    margin-right: 1px;
}

.sec-head {
    height: 20px;
    margin: 12px 0 0 -10px;
    display: flex;
    align-items: center;
    font-weight: 600;
    font-size: 11.500px;
    color: #333;
}

.applied {
    margin-top: 16px;
}

.name-lbl {
    margin-top: 4px;
    height: 14px;
    line-height: 14px;
}

.name-input {
    margin-top: 2px;
    height: 21px;
    width: 218px;
    line-height: 19px;
    padding-left: 4px;
    background: #fff;
    border: 1px solid #cfcfcf;
}

.all-props {
    margin-top: 10px;
    height: 14px;
    line-height: 14px;
    color: #127b6c;
}

.steps {
    margin-top: 4px;
    width: 217px;
    height: 680px;
    border: 1px solid #bdbdbd;
}

.step {
    height: 20px;
    display: flex;
    align-items: center;
    padding-left: 21px;
    white-space: nowrap;
    font-size: 11.400px;
}

.gear {
    width: 12px;
    height: 12px;
    margin-left: auto;
    margin-right: 7px;
    flex: none;
}

.step.selected {
    background: #cbcbcb;
    border-left: 2px solid #217a6b;
    padding-left: 4px;
}

.step-x {
    color: #555;
    margin-right: 4px;
    flex: none;
}

/* status bar */
.statusbar {
    height: 20px;
    flex: none;
    border-top: 1px solid #d8d8d8;
    display: flex;
    align-items: center;
    padding: 0 3px 0 2px;
    font-size: 10.500px;
    color: #444;
}

.profiling {
    margin-left: 15px;
}

.preview {
    margin-left: auto;
    font-size: 10.700px;
}

/* faint logo over the details pane */
.watermark {
    position: absolute;
    left: 850px;
    top: 908px;
    width: 216px;
    text-align: center;
    color: #e7e6e4;
    pointer-events: none;
}

.wm-ar {
    font-family: "DejaVu Sans", sans-serif;
    font-weight: 700;
    font-size: 72px;
    line-height: 86px;
    white-space: nowrap;
    -webkit-text-stroke: 2px #e7e6e4;
}

.wm-en {
    font-family: "Open Sans", sans-serif;
    font-weight: 700;
    font-size: 32px;
    line-height: 36px;
}
```
